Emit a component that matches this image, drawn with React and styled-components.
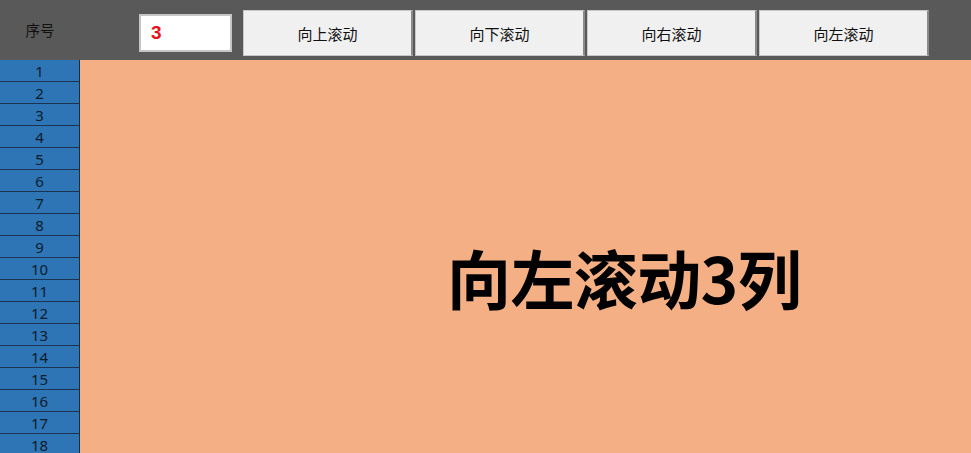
import styled, { createGlobalStyle } from "styled-components";

const GlobalStyle = createGlobalStyle`
  html, body {
    margin: 0;
    padding: 0;
    background: #f4b084;
    overflow: hidden;
  }
  body {
    font-family: "Noto Sans CJK SC", "Noto Sans", sans-serif;
  }
`;

const Page = styled.div`
  width: 971px;
  height: 453px;
  display: flex;
  flex-direction: column;
  overflow: hidden;
`;

const Toolbar = styled.div`
  height: 60px;
  flex-shrink: 0;
  display: flex;
  align-items: flex-start;
  background: #595959;
`;

const HeadCell = styled.div`
  width: 80px;
  height: 58px;
  display: flex;
  align-items: center;
  justify-content: center;
  font-size: 14.5px;
  color: #111;
`;

const CountBox = styled.div`
  margin: 14px 0 0 59px;
  width: 93px;
  height: 38px;
  box-sizing: border-box;
  background: #fff;
  border: 2px solid #c6c6c6;
  padding-left: 10px;
  display: flex;
  align-items: center;
  font-family: "Liberation Sans", Arial, sans-serif;
  font-weight: 700;
  font-size: 19px;
  color: #e8101a;
`;

const ButtonRow = styled.div`
  margin: 10px 0 0 11px;
  display: flex;
  gap: 2px;
`;

const ScrollButton = styled.button`
  width: 170px;
  height: 46px;
  box-sizing: border-box;
  background: #f0f0f0;
  border: 1px solid #c8c8c8;
  border-right: 2px solid #8a8a8a;
  font-family: inherit;
  font-size: 15px;
  color: #111;
  padding: 0;
  cursor: pointer;
`;

const Body = styled.div`
  flex: 1;
  display: grid;
  grid-template-columns: 80px 1fr;
  min-height: 0;
`;

const RowHeads = styled.div`
  background: #2e75b6;
  border-right: 1px solid #1a2e45;
  display: flex;
  flex-direction: column;
`;

const RowHead = styled.div`
  height: 22px;
  flex-shrink: 0;
  box-sizing: border-box;
  border-bottom: 1px solid #1b3350;
  display: flex;
  align-items: center;
  justify-content: center;
  font-family: "Noto Sans", sans-serif;
  font-size: 15px;
  color: #0d1b2a;
`;

const Sheet = styled.div`
  background: #f4b084;
  padding: 184px 0 0 367px;
`;

const Banner = styled.div`
  font-size: 64px;
  font-weight: 700;
  line-height: 1;
  color: #000;
  white-space: nowrap;
  letter-spacing: -0.6px;
`;

const buttons = ["向上滚动", "向下滚动", "向右滚动", "向左滚动"];
const rows = Array.from({ length: 18 }, (_, i) => i + 1);

export default function App() {
  return (
    <Page>
      <GlobalStyle />
      <Toolbar>
        <HeadCell>序号</HeadCell>
        <CountBox>3</CountBox>
        <ButtonRow>
          {buttons.map((label) => (
            <ScrollButton key={label}>{label}</ScrollButton>
          ))}
        </ButtonRow>
      </Toolbar>
      <Body>
        <RowHeads>
          {rows.map((n) => (
            <RowHead key={n}>{n}</RowHead>
          ))}
        </RowHeads>
        <Sheet>
          <Banner>向左滚动3列</Banner>
        </Sheet>
      </Body>
    </Page>
  );
}
